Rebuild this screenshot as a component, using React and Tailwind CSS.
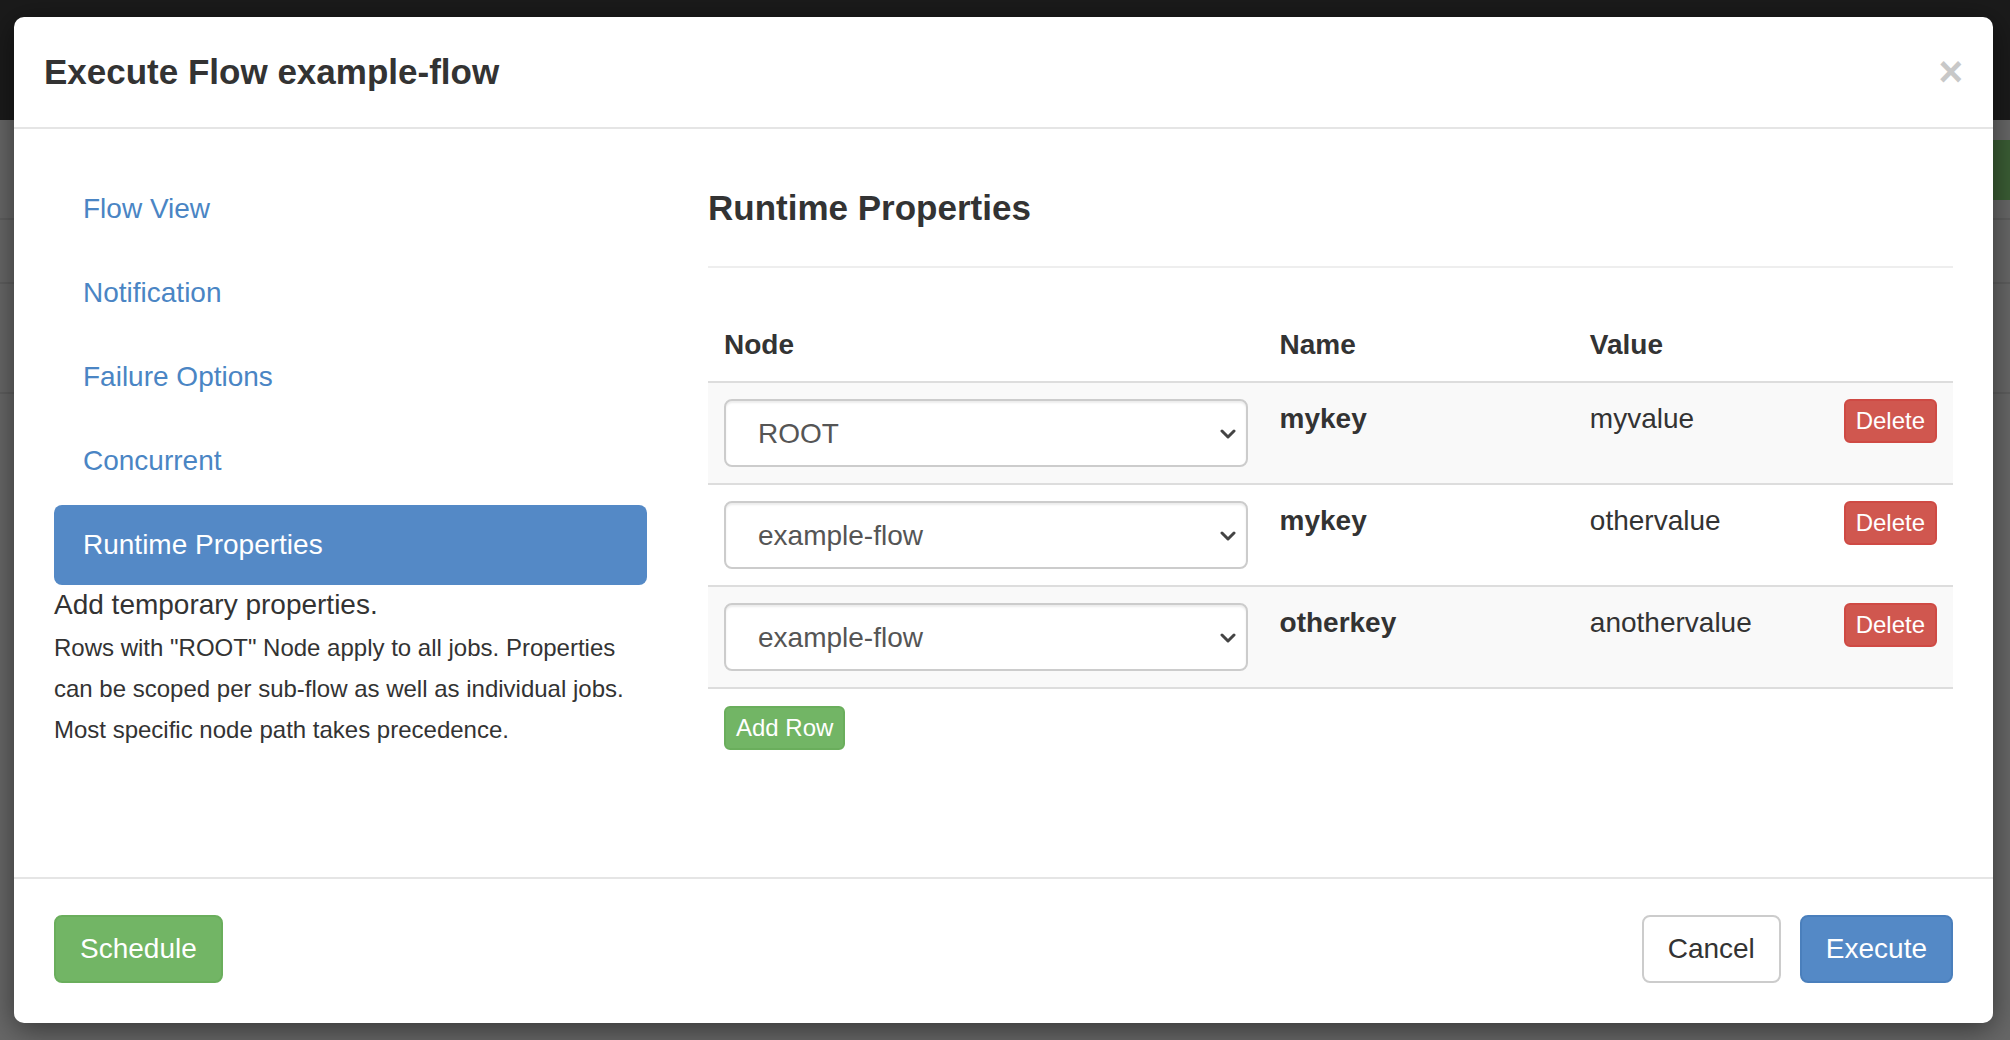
import React from "react";

const navItems = ["Flow View", "Notification", "Failure Options", "Concurrent", "Runtime Properties"];

const rows = [
  { node: "ROOT", name: "mykey", value: "myvalue" },
  { node: "example-flow", name: "mykey", value: "othervalue" },
  { node: "example-flow", name: "otherkey", value: "anothervalue" },
];

const Chevron = () => (
  <svg width="16" height="10" viewBox="0 0 16 10" fill="none">
    <polyline points="2,2 8,8 14,2" stroke="#444" strokeWidth="3" strokeLinecap="round" strokeLinejoin="round" />
  </svg>
);

const NodeSelect = ({ value }) => (
  <div className="flex h-[68px] w-full items-center justify-between rounded-[8px] border-2 border-[#cccccc] bg-white pl-[32px] pr-[10px] pt-[2px] text-[28px] text-[#555555] shadow-[inset_0_2px_2px_rgba(0,0,0,0.075)]">
    <span>{value}</span>
    <Chevron />
  </div>
);

export default function App() {
  return (
    <div className="relative h-[1040px] w-[2010px] overflow-hidden bg-[#686868] font-['Liberation_Sans',Arial,sans-serif] text-[#333333]">
      {/* page behind the backdrop */}
      <div className="h-[120px] bg-[#1b1b1b]" />
      <div className="flex flex-col">
        <div className="flex h-[100px] justify-end border-b-2 border-[#5f5f5f]">
          <div className="mt-[20px] h-[60px] w-[60px] bg-[#3b5e35]" />
        </div>
        <div className="h-[64px] border-b-2 border-[#5f5f5f]" />
        <div className="h-[110px] border-b-2 border-[#5f5f5f]" />
      </div>

      {/* modal */}
      <div className="absolute left-[14px] top-[17px] flex h-[1006px] w-[1979px] flex-col rounded-[10px] bg-white shadow-[0_6px_30px_rgba(0,0,0,0.5)]">
        <div className="flex items-center justify-between border-b-2 border-[#e5e5e5] px-[30px] py-[30px]">
          <h4 className="text-[35px] font-semibold leading-[50px] text-[#333333]">Execute Flow example-flow</h4>
          <span className="text-[42px] font-bold leading-[50px] text-[#c8c8c8]">×</span>
        </div>

        <div className="flex flex-1 px-[40px] pt-[40px]">
          <div className="w-[593px] shrink-0">
            <ul className="flex flex-col gap-[4px]">
              {navItems.map((item) => {
                const active = item === "Runtime Properties";
                return (
                  <li
                    key={item}
                    className={
                      active
                        ? "rounded-[8px] bg-[#5489c6] px-[29px] py-[20px] text-[28px] leading-[40px] text-white"
                        : "rounded-[8px] px-[29px] py-[20px] text-[28px] leading-[40px] text-[#4a85c4]"
                    }
                  >
                    {item}
                  </li>
                );
              })}
            </ul>
            <p className="text-[28px] leading-[40px]">Add temporary properties.</p>
            <p className="mt-[2px] text-[24px] leading-[41px]">
              Rows with "ROOT" Node apply to all jobs. Properties can be scoped per sub-flow as well as individual jobs. Most specific node path takes precedence.
            </p>
          </div>

          <div className="ml-[61px] flex-1">
            <div className="mt-[14px] border-b-2 border-[#eeeeee] pb-[33px]">
              <h3 className="text-[35px] font-semibold leading-[50px] text-[#333333]">Runtime Properties</h3>
            </div>

            <table className="mt-[40px] w-full border-collapse text-[28px] leading-[40px]">
              <thead>
                <tr className="border-b-2 border-[#dddddd]">
                  <th className="w-[557px] px-[16px] pb-[16px] pt-[17px] text-left font-bold">Node</th>
                  <th className="w-[311px] px-[16px] pb-[16px] pt-[17px] text-left font-bold">Name</th>
                  <th className="w-[254px] px-[16px] pb-[16px] pt-[17px] text-left font-bold">Value</th>
                  <th className="px-[16px] pb-[16px] pt-[17px]" />
                </tr>
              </thead>
              <tbody>
                {rows.map((row, i) => (
                  <tr
                    key={i}
                    className={
                      i % 2 === 0
                        ? "border-y-2 border-[#dddddd] bg-[#f9f9f9]"
                        : "border-y-2 border-[#dddddd] bg-white"
                    }
                  >
                    <td className="px-[16px] py-[16px] align-top">
                      <NodeSelect value={row.node} />
                    </td>
                    <td className="px-[16px] py-[16px] align-top font-bold">{row.name}</td>
                    <td className="px-[16px] py-[16px] align-top">{row.value}</td>
                    <td className="px-[16px] py-[16px] align-top">
                      <button className="rounded-[6px] border-2 border-[#cf4a44] bg-[#d0574f] px-[10px] py-[2px] text-[24px] leading-[36px] text-white">
                        Delete
                      </button>
                    </td>
                  </tr>
                ))}
              </tbody>
            </table>

            <button className="ml-[16px] mt-[17px] rounded-[6px] border-2 border-[#6aae5c] bg-[#72b565] px-[10px] py-[2px] text-[24px] leading-[36px] text-white">
              Add Row
            </button>
          </div>
        </div>

        <div className="flex items-center justify-between border-t-2 border-[#e5e5e5] px-[40px] pb-[40px] pt-[36px]">
          <button className="h-[68px] rounded-[8px] border-2 border-[#6aae5c] bg-[#72b565] px-[24px] text-[28px] text-white">
            Schedule
          </button>
          <div className="flex gap-[19px]">
            <button className="h-[68px] rounded-[8px] border-2 border-[#cccccc] bg-white px-[24px] text-[28px] text-[#333333]">
              Cancel
            </button>
            <button className="h-[68px] rounded-[8px] border-2 border-[#4a7fbc] bg-[#5489c6] px-[24px] text-[28px] text-white">
              Execute
            </button>
          </div>
        </div>
      </div>
    </div>
  );
}
